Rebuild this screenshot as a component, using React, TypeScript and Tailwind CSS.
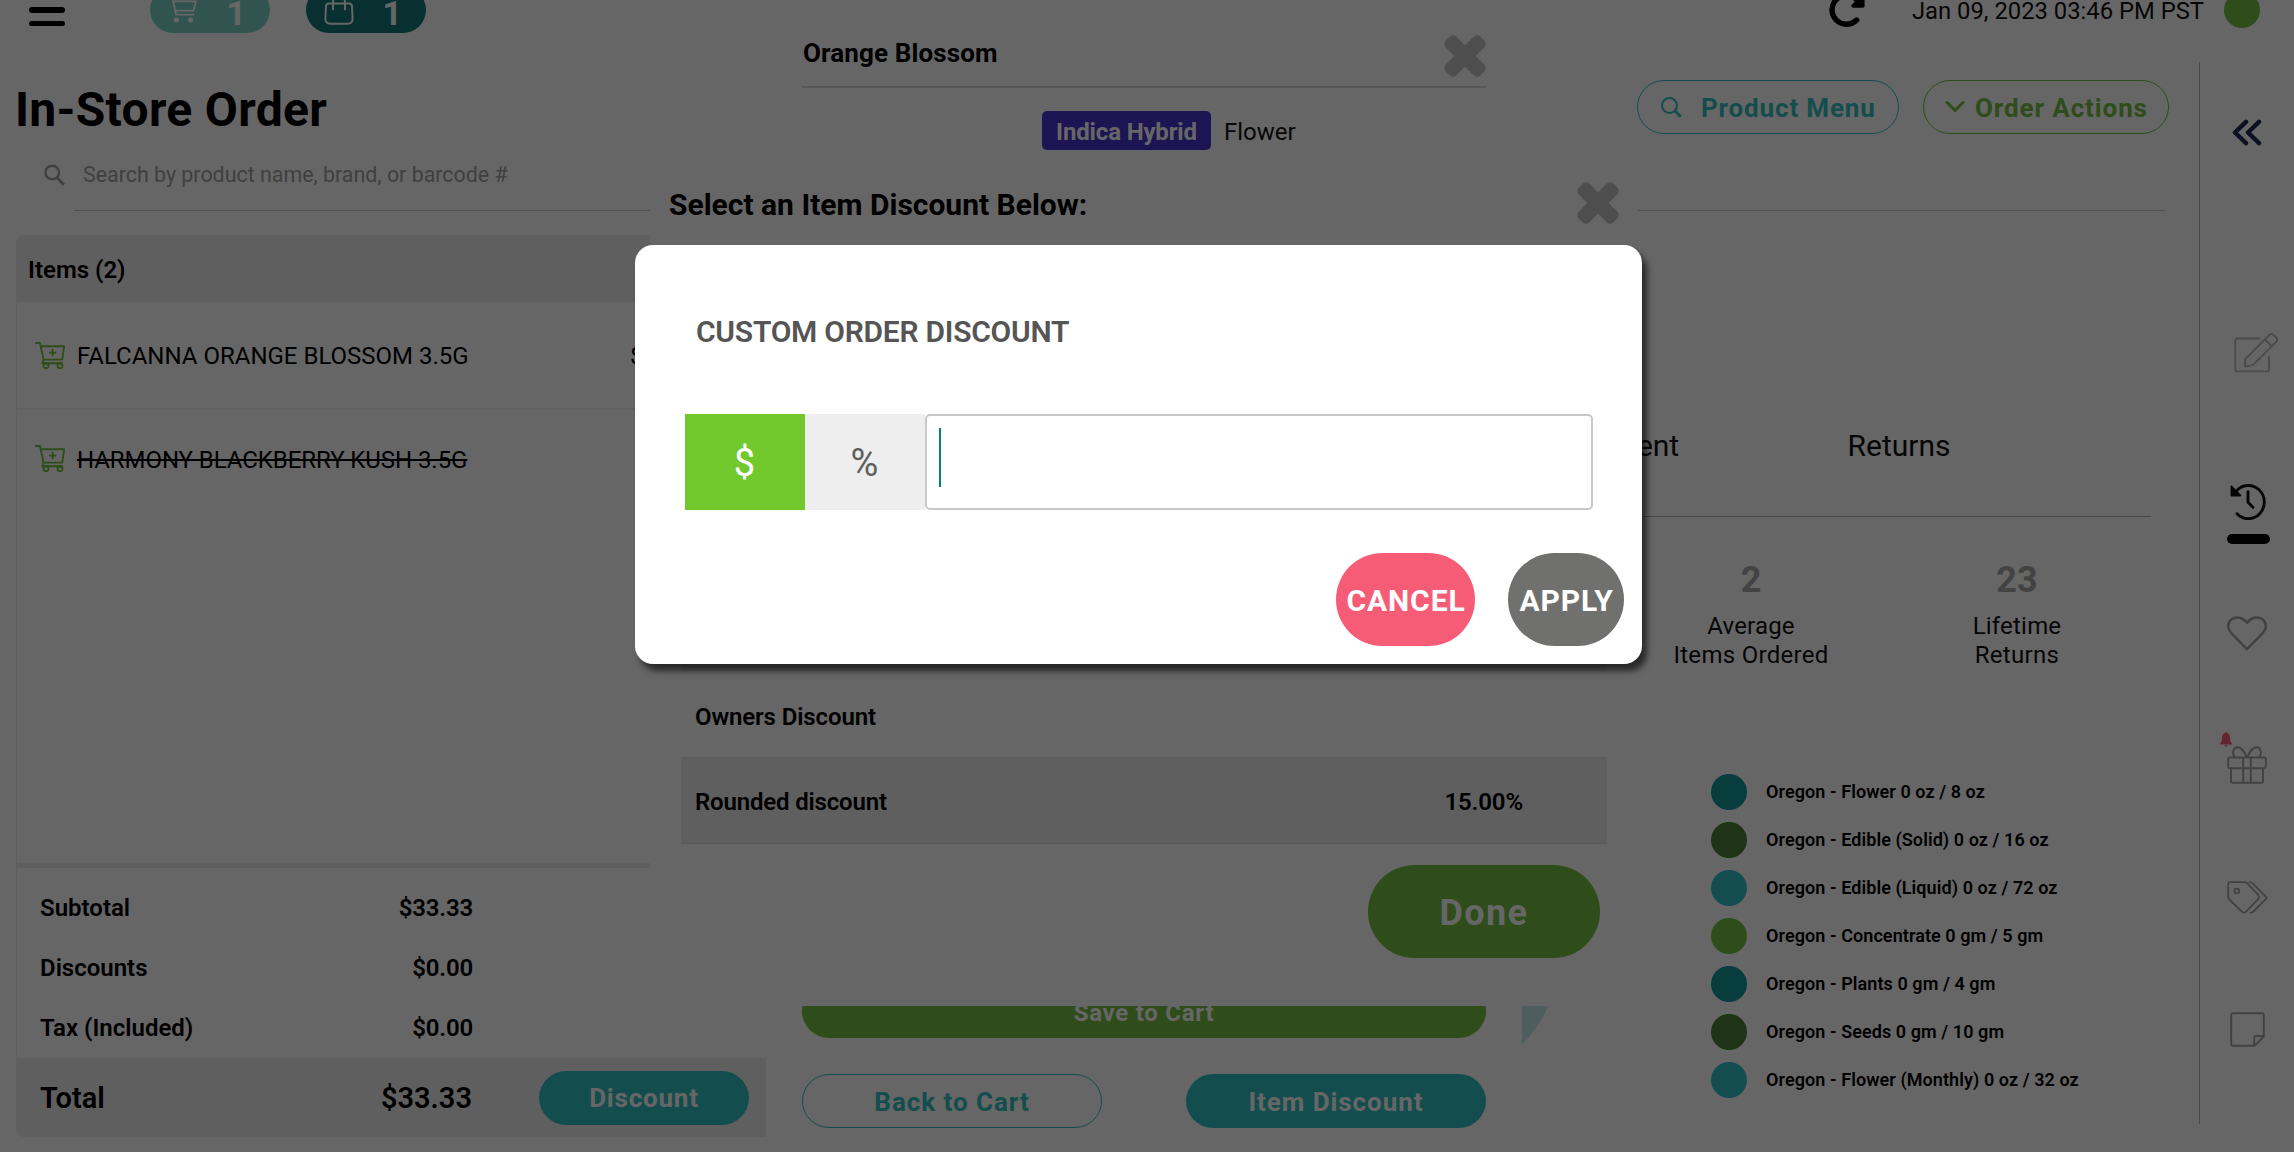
import React from "react";

interface PanelProps {
  children: React.ReactNode;
}

const limits = [
  { color: "bg-[#149898]", label: "Oregon - Flower 0 oz / 8 oz" },
  { color: "bg-[#4e803e]", label: "Oregon - Edible (Solid) 0 oz / 16 oz" },
  { color: "bg-[#32c0c0]", label: "Oregon - Edible (Liquid) 0 oz / 72 oz" },
  { color: "bg-[#73c041]", label: "Oregon - Concentrate 0 gm / 5 gm" },
  { color: "bg-[#149898]", label: "Oregon - Plants 0 gm / 4 gm" },
  { color: "bg-[#4e803e]", label: "Oregon - Seeds 0 gm / 10 gm" },
  { color: "bg-[#32c0c0]", label: "Oregon - Flower (Monthly) 0 oz / 32 oz" },
];

const totals = [
  { label: "Subtotal", value: "$33.33" },
  { label: "Discounts", value: "$0.00" },
  { label: "Tax (Included)", value: "$0.00" },
];

const CloseIcon = () => (
  <svg viewBox="0 0 42 42" className="w-[42px] h-[42px] shrink-0" fill="#c4c4c4">
    <rect x="-3.5" y="13.5" width="49" height="15" rx="4.5" transform="rotate(45 21 21)" />
    <rect x="-3.5" y="13.5" width="49" height="15" rx="4.5" transform="rotate(-45 21 21)" />
  </svg>
);

const ItemCartIcon = () => (
  <svg viewBox="0 0 30 27" className="w-[30px] h-[27px] shrink-0" fill="none" stroke="#73c041" strokeWidth="1.9" strokeLinecap="round" strokeLinejoin="round">
    <path d="M.9 1H5l3.6 16.6h18.6L29.2 4.3H5.7M8.6 17.6l-1.2 3.6H27" />
    <path d="M17.7 7.6v6M14.7 10.6h6" />
    <circle cx="11" cy="23.7" r="2.5" />
    <circle cx="25" cy="23.7" r="2.5" />
  </svg>
);

const Header = () => (
  <header className="-mt-[13px] h-[46px] flex items-center shrink-0 pl-[29px] pr-[34px]">
    <div className="flex flex-col gap-2 w-9">
      <span className="h-[5.6px] rounded-full bg-black" />
      <span className="h-[5.6px] rounded-full bg-black" />
      <span className="h-[5.6px] rounded-full bg-black" />
    </div>
    <div className="ml-[85px] w-[120px] h-[46px] rounded-full bg-[#7ad2ca] flex items-center pl-[18px] pr-6 justify-between">
      <svg viewBox="0 0 29 26" className="w-[29px] h-[26px]" fill="none" stroke="#fff" strokeWidth="1.8" strokeLinejoin="round">
        <path d="M0 1h4.5L8 17.6h18M5.3 4.3H28l-2.500 9.300H7.300" />
        <circle cx="8.400" cy="23" r="2.500" fill="#fff" stroke="none" />
        <circle cx="22.600" cy="23" r="2.500" fill="#fff" stroke="none" />
      </svg>
      <span className="text-[34px] leading-[46px] font-bold text-white pt-[5px]">1</span>
    </div>
    <div className="ml-9 w-[120px] h-[46px] rounded-full bg-[#147878] flex items-center pl-[18px] pr-6 justify-between">
      <svg viewBox="0 0 30 30" className="w-[30px] h-[30px]" fill="none" stroke="#fff" strokeWidth="2" strokeLinecap="round">
        <path d="M5 8.500h20a3 3 0 0 1 3 2.800l.6 12.700a4.600 4.600 0 0 1-4.600 4.800H6a4.600 4.600 0 0 1-4.600-4.800L2 11.300a3 3 0 0 1 3-2.800Z" />
        <path d="M9 14.500V7a6 6 0 0 1 12 0v7.500" />
      </svg>
      <span className="text-[34px] leading-[46px] font-bold text-white pt-[5px]">1</span>
    </div>
    <svg viewBox="0 0 36 36" className="ml-auto w-9 h-9" fill="none">
      <path d="M27.600 28A14.400 14.400 0 1 1 28 8" stroke="#000" strokeWidth="5.400" strokeLinecap="round" />
      <path d="M33 2.500a2.600 2.600 0 0 1 2.600 2V14a1.800 1.800 0 0 1-1.800 1.800h-9.600a1.900 1.900 0 0 1-1.300-3.200Z" fill="#000" />
    </svg>
    <span className="ml-[47px] text-[23.8px] leading-7 text-[#111] pt-0.5">Jan 09, 2023 03:46 PM PST</span>
    <span className="ml-5 w-9 h-9 rounded-full bg-[#73c041]" />
  </header>
);

const OrderPanel = () => (
  <section className="w-[750px] h-[902px] flex flex-col rounded-l-lg border-l border-[#eee] overflow-hidden">
    <div className="h-[67px] bg-[#eee] flex items-center pl-[11px] text-2xl font-semibold pt-[3px]">Items (2)</div>
    <div className="h-[108px] flex items-center pl-[18px] border-b-2 border-[#f3f3f3]">
      <ItemCartIcon />
      <span className="ml-3 w-[553px] text-2xl pt-0.5">FALCANNA ORANGE BLOSSOM 3.5G</span>
      <span className="text-2xl pt-0.5">$33.33</span>
    </div>
    <div className="h-[97px] flex items-center pl-[18px]">
      <ItemCartIcon />
      <span className="ml-3 text-2xl line-through tracking-[-0.07px] pt-0.5">HARMONY BLACKBERRY KUSH 3.5G</span>
    </div>
    <div className="mt-auto h-[195px] border-t-[5px] border-[#eee] pt-[10px] flex flex-col">
      {totals.map((row) => (
        <div key={row.label} className="h-[60px] w-[456px] pl-[23px] flex items-center justify-between text-2xl font-semibold">
          <span>{row.label}</span>
          <span className="tracking-[-0.2px]">{row.value}</span>
        </div>
      ))}
    </div>
    <div className="h-[79px] bg-[#eee] flex items-center pl-[23px] text-[29px] font-semibold shrink-0">
      <div className="w-[432px] flex justify-between pt-0.5">
        <span>Total</span>
        <span>$33.33</span>
      </div>
      <button className="ml-[67px] w-[210px] h-[54px] rounded-full bg-[#32c0c0] text-white text-[26px] font-bold tracking-[0.8px] pt-0.5">
        Discount
      </button>
    </div>
  </section>
);

const Stat = ({ value, top, bottom }: { value: string; top: string; bottom: string }) => (
  <div className="w-[266px] flex flex-col items-center">
    <span className="text-4xl leading-[42px] font-bold text-[#a8a8a8]">{value}</span>
    <span className="mt-[11px] text-2xl leading-[29px] tracking-[0.2px] text-[#111]">{top}</span>
    <span className="text-2xl leading-[29px] tracking-[0.3px] text-[#111]">{bottom}</span>
  </div>
);

const CustomerPanel = () => (
  <section className="relative w-[700px] flex flex-col">
    {/* Limit chart */}
    <div className="absolute left-[-152px] top-[589px] w-[260px] h-[260px] rounded-full bg-[#c3ebeb]" />
    <div className="h-[282px] border-b border-[#b4b4b4] flex items-center pl-[50px] pt-[140px]">
      <span className="w-[266px] text-center text-3xl text-[#111] -ml-px">Recent</span>
      <span className="w-[266px] text-center text-3xl text-[#111]">Returns</span>
    </div>
    <div className="pl-[167px] mt-[42px] flex">
      <Stat value="2" top="Average" bottom="Items Ordered" />
      <Stat value="23" top="Lifetime" bottom="Returns" />
    </div>
    <ul className="mt-[104px] pl-[260px] flex flex-col gap-3">
      {limits.map((item) => (
        <li key={item.label} className="h-9 flex items-center gap-[19px]">
          <span className={`w-9 h-9 rounded-full ${item.color}`} />
          <span className="text-lg font-semibold tracking-[0.08px]">{item.label}</span>
        </li>
      ))}
    </ul>
  </section>
);

const RailCell = ({ children }: PanelProps) => (
  <div className="h-33 flex items-center justify-center shrink-0">{children}</div>
);

const Rail = () => (
  <aside className="w-[95px] h-[1062px] border-l border-[#b4b4b4] flex flex-col">
    <div className="h-[141px] flex items-center justify-center shrink-0">
      <svg viewBox="0 0 30 27" className="w-[30px] h-[27px]" fill="none" stroke="#1c2c52" strokeWidth="4.400" strokeLinecap="round" strokeLinejoin="round">
        <path d="M14 2.800 3 13.500 14 24.200M27 2.800 16 13.500 27 24.200" />
      </svg>
    </div>
    <div className="mt-[84px] h-33 flex items-center justify-center shrink-0 pl-[18px]">
      <svg viewBox="0 0 44 40" className="w-11 h-10" fill="none" stroke="#bcbcbc" strokeWidth="1.900" strokeLinecap="round" strokeLinejoin="round">
        <path d="M25.500 5.500H3.600A2.400 2.400 0 0 0 1.200 8v28a2.400 2.400 0 0 0 2.400 2.400h29A2.400 2.400 0 0 0 35 36V24" />
        <path d="M11 33.500v-7.200L35.300 2a3 3 0 0 1 4.200 0l2.700 2.700a3 3 0 0 1 0 4.200L19.600 31.400a3.500 3.500 0 0 1-2 1Zm20-27 6.800 6.800" />
      </svg>
    </div>
    <div className="mt-[63px] h-[85px] flex flex-col items-center shrink-0 pl-0.5">
      <svg viewBox="0 0 36 38" className="w-9 h-[38px]" fill="none" stroke="#111" strokeWidth="2.900" strokeLinecap="round" strokeLinejoin="round">
        <path d="M6.200 9.200A16 16.600 0 1 1 7 31.800" />
        <path d="M18 9.800v10.400l5 5" />
        <path d="M1.400 4.200v9.400h9.200Z" fill="#111" strokeWidth="1.600" />
      </svg>
      <span className="mt-[14px] w-[43px] h-2.5 rounded-full bg-black" />
    </div>
    <RailCell>
      <svg viewBox="0 0 40 35" className="w-10 h-[35px]" fill="none" stroke="#a4a4a4" strokeWidth="2.400" strokeLinejoin="round">
        <path d="M20 33.200 4 16.800C-.2 12.200.5 6 4.600 3.200c5-3.400 11.400-1.700 15.400 3.600 4-5.300 10.400-7 15.400-3.600 4.100 2.800 4.800 9 .6 13.600Z" />
      </svg>
    </RailCell>
    <RailCell>
      <div className="relative">
        <svg viewBox="0 0 40 38" className="w-10 h-[38px]" fill="none" stroke="#a4a4a4" strokeWidth="1.900" strokeLinejoin="round">
          <rect x="1.200" y="11.500" width="37.600" height="10.800" rx="1.500" />
          <path d="M4 22.300V35a1.800 1.800 0 0 0 1.800 1.800h28.400A1.800 1.800 0 0 0 36 35V22.300M16.200 11.500v25.300M23.800 11.500v25.300" />
          <path d="M20 11.500C16.500 4.500 14.300 1.200 10.800 1.200c-5 0-6 6.500-3 10.300M20 11.500c3.500-7 5.700-10.300 9.200-10.300 5 0 6 6.500 3 10.300" />
        </svg>
        <svg viewBox="0 0 12 15" className="absolute -left-[7px] -top-[14px] w-3 h-[15px]" fill="#f75c76">
          <path d="M6 0c.7 0 1 .4 1 1.100 2 .6 3 2.200 3 4.400 0 3.300.5 4.500 2 6v1H0v-1c1.500-1.500 2-2.700 2-6C2 3.300 3 1.700 5 1.100 5 .4 5.300 0 6 0ZM4.500 13.300h3a1.500 1.500 0 0 1-3 0Z" />
        </svg>
      </div>
    </RailCell>
    <RailCell>
      <svg viewBox="0 0 41 33" className="w-[41px] h-[33px]" fill="none" stroke="#a4a4a4" strokeWidth="1.800" strokeLinejoin="round" strokeLinecap="round">
        <path d="M1.200 3a1.800 1.800 0 0 1 1.800-1.800h14.500a4 4 0 0 1 2.800 1.200L31 13.600a3.400 3.400 0 0 1 0 4.800L18.800 30.800a2.600 2.600 0 0 1-3.700 0L2.400 18.500A4 4 0 0 1 1.200 15.700Z" />
        <path d="M22.500 1.200c1.500 0 2.500.5 3.500 1.500l13 13.200c.6.6.6 1.400 0 2L26.500 30.500c-.9.900-1.600 1.200-2.800 1.200" />
        <circle cx="9.800" cy="10" r="2.400" />
      </svg>
    </RailCell>
    <RailCell>
      <svg viewBox="0 0 35 35" className="w-[35px] h-[35px]" fill="none" stroke="#a4a4a4" strokeWidth="1.900" strokeLinejoin="round">
        <path d="M1.200 3A1.800 1.800 0 0 1 3 1.200h29A1.800 1.800 0 0 1 33.800 3v21.500l-9.300 9.300H3A1.800 1.800 0 0 1 1.200 32Z" />
        <path d="M24.200 33.800V25.500a1.500 1.500 0 0 1 1.500-1.500h8.100" />
      </svg>
    </RailCell>
  </aside>
);

// Product details drawer, sits under the item discount dialog
const ProductModal = () => (
  <div className="absolute left-[766px] top-0 w-[756px] h-full bg-white px-9 flex flex-col">
    <div className="h-[88px] border-b-2 border-[#d8d8d8] pt-[25px] flex items-center justify-between shrink-0">
      <span className="text-[26px] font-bold pl-px -mt-1 tracking-[0.12px]">Orange Blossom</span>
      <CloseIcon />
    </div>
    <div className="mt-[23px] pl-60 flex items-center gap-[13px]">
      <span className="w-[169px] h-[39px] rounded-[5px] bg-[#4a32d0] text-white text-2xl font-bold text-center leading-[42px] tracking-[-0.15px]">
        Indica Hybrid
      </span>
      <span className="text-2xl text-[#111] pt-[3px]">Flower</span>
    </div>
    <div className="mt-auto mb-6 flex flex-col gap-9">
      <button className="h-[54px] rounded-full bg-[#73c041] text-white text-2xl font-bold tracking-[0.75px] pt-1">Save to Cart</button>
      <div className="flex justify-between text-[26px] font-bold tracking-[0.95px]">
        <button className="w-[300px] h-[54px] rounded-full border-[1.5px] border-[#32c0c0] text-[#32c0c0] pt-[3px]">Back to Cart</button>
        <button className="w-[300px] h-[54px] rounded-full bg-[#32c0c0] text-white pt-[3px]">Item Discount</button>
      </div>
    </div>
  </div>
);

const ItemDiscountDialog = () => (
  <div className="absolute left-[650px] top-[156px] w-[988px] h-[850px] bg-white flex flex-col">
    <div className="h-[94px] pl-[19px] pr-[19px] flex items-center justify-between shrink-0">
      <span className="text-[30px] font-bold pt-0.5">Select an Item Discount Below:</span>
      <CloseIcon />
    </div>
    <div className="mx-[31px] mt-auto flex flex-col text-2xl font-semibold">
      <div className="h-[86px] bg-[#eee]" />
      <div className="h-[86px] flex items-center px-[14px] pt-1.5 tracking-[-0.12px]">Owners Discount</div>
      <div className="h-[87px] flex items-center justify-between pl-[14px] pr-[84px] pt-[3px] bg-[#eee] border-y border-[#e0e0e0]">
        <span className="tracking-[-0.17px]">Rounded discount</span>
        <span className="tracking-[-0.13px]">15.00%</span>
      </div>
    </div>
    <button className="mt-[21px] mb-[48px] mr-[38px] self-end w-[232px] h-[93px] rounded-full bg-[#73c041] text-white text-4xl font-bold tracking-[1.400px] pt-[3px] shrink-0">
      Done
    </button>
  </div>
);

const CustomDiscountModal = () => (
  <div className="absolute left-[635px] top-[245px] w-[1007px] h-[419px] rounded-[18px] bg-white shadow-[5px_7px_6px_rgba(0,0,0,0.6)] flex flex-col">
    <h2 className="mt-[67px] pl-[61px] text-[30px] leading-10 font-semibold tracking-[-0.25px] text-[#555]">CUSTOM ORDER DISCOUNT</h2>
    <div className="mt-[62px] ml-[49.500px] mr-[49px] h-24 flex text-[38px]">
      <button className="w-[120px] bg-[#72c92d] text-white pt-0.5">$</button>
      <button className="w-[120px] bg-[#eee] text-[#5f5f5f] pt-0.5">%</button>
      <div className="flex-1 border-2 border-[#c8c8c8] rounded-[5px] pl-3 pt-3">
        <div className="w-[2.5px] h-[59px] bg-[#008577]" />
      </div>
    </div>
    <div className="mt-[43px] mr-[18px] flex justify-end gap-[33px] text-[30px] font-bold tracking-[0.9px] text-white">
      <button className="w-[139px] h-[93px] rounded-full bg-[#f75c76] pt-0.5 pl-px">CANCEL</button>
      <button className="w-[116px] h-[93px] rounded-full bg-[#70706e] pt-0.5 pl-px">APPLY</button>
    </div>
  </div>
);

export default function App() {
  return (
    <div className="relative w-[2294px] h-[1152px] overflow-hidden bg-white text-black font-['Roboto',sans-serif]">
      <div className="h-full flex flex-col">
        <Header />
        <div className="flex mt-[29px]">
          <main className="w-[2183px] pl-4 shrink-0">
            <div className="mt-[18px] h-[54px] flex items-center">
              <h1 className="text-5xl leading-[54px] font-bold tracking-[0.3px] pt-1.5 -ml-px">In-Store Order</h1>
              <button className="ml-auto w-[262px] h-[54px] rounded-full border-[1.5px] border-[#32c0c0] text-[#32c0c0] text-[26px] font-bold tracking-[0.85px] flex items-center pl-[23px] pt-0.5">
                <svg viewBox="0 0 21 21" className="w-[21px] h-[21px] mr-[19px] -mt-0.5" fill="none" stroke="#32c0c0" strokeWidth="2">
                  <circle cx="8.500" cy="8.500" r="7.500" />
                  <path d="m13.800 13.800 6 6" strokeWidth="2.800" />
                </svg>
                Product Menu
              </button>
              <button className="ml-6 mr-[14px] w-[246px] h-[54px] rounded-full border-[1.5px] border-[#73c041] text-[#73c041] text-[26px] font-bold tracking-[0.9px] flex items-center pl-[21px] pt-0.5">
                <svg viewBox="0 0 20 13" className="w-5 h-[13px] mr-[10px] -mt-1" fill="none" stroke="#73c041" strokeWidth="3" strokeLinecap="round" strokeLinejoin="round">
                  <path d="m2 2.500 8 8 8-8" />
                </svg>
                Order Actions
              </button>
            </div>
            <div className="h-[77px] flex items-center">
              <svg viewBox="0 0 21 22" className="ml-7 w-[21px] h-[22px] mt-[5px]" fill="none" stroke="#a0a0a0" strokeWidth="2.400">
                <circle cx="8.200" cy="8.500" r="6.800" />
                <path d="m13 13.800 7 7" strokeWidth="3" />
              </svg>
              <div className="ml-[9px] mr-[18px] flex-1 h-full border-b border-[#cacaca] pl-[9px] pt-1.5 flex items-center text-[21.4px] text-[#a0a0a0]">
                Search by product name, brand, or barcode #
              </div>
            </div>
            <div className="mt-6 flex justify-between">
              <OrderPanel />
              <div className="mr-8 flex justify-end">
                <CustomerPanel />
              </div>
            </div>
          </main>
          <div className="ml-4">
            <Rail />
          </div>
        </div>
      </div>
      <ProductModal />
      <ItemDiscountDialog />
      <div className="absolute inset-0 bg-black/60" />
      <CustomDiscountModal />
    </div>
  );
}
